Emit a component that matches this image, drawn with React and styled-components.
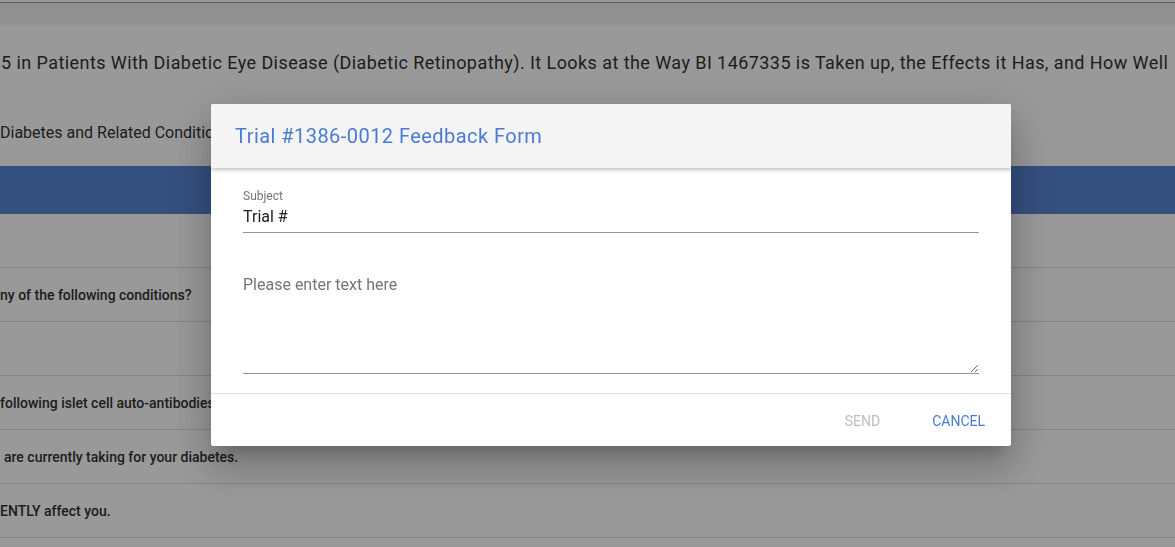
import styled, { createGlobalStyle } from "styled-components";

const GlobalStyle = createGlobalStyle`
  * { box-sizing: border-box; }
  html, body {
    margin: 0;
    padding: 0;
    background: #ffffff;
    font-family: Roboto, "Liberation Sans", sans-serif;
    overflow: hidden;
  }
`;

const Page = styled.div`
  width: 100vw;
  height: 100vh;
  overflow: hidden;
  background: #ffffff;
  padding-top: 2px;
`;

const TopBar = styled.div`
  height: 23px;
  background: #f1f1f1;
  border-top: 1px solid #9a9a9a;
  border-bottom: 1px solid #f6f6f6;
`;

const TitleLine = styled.div`
  height: 74px;
  display: flex;
  align-items: center;
  padding-left: 1px;
  font-size: 18px;
  letter-spacing: 0.43px;
  color: #333;
  white-space: nowrap;
  overflow: hidden;
`;

const SubLine = styled.div`
  height: 67px;
  display: flex;
  align-items: center;
  padding-top: 1px;
  padding-bottom: 1px;
  font-size: 16px;
  color: #333;
  white-space: nowrap;
`;

const BlueBar = styled.div`
  height: 48px;
  background: #5885d4;
`;

const Spacer = styled.div`
  height: 54px;
  border-bottom: 1px solid #dcdcdc;
`;

const Row = styled.div`
  height: 54px;
  display: flex;
  align-items: center;
  padding-left: ${(p) => p.$indent || 0}px;
  border-bottom: 1px solid #dcdcdc;
  font-size: 14px;
  font-weight: 500;
  color: #333;
  white-space: nowrap;
`;

const Overlay = styled.div`
  position: fixed;
  inset: 0;
  background: rgba(0, 0, 0, 0.4);
  display: flex;
  justify-content: center;
  align-items: flex-start;
  padding-top: 104px;
  padding-left: 47px;
`;

const Dialog = styled.div`
  width: 800px;
  background: #ffffff;
  border-radius: 2px;
  box-shadow: 0 11px 15px -7px rgba(0, 0, 0, 0.2),
    0 24px 38px 3px rgba(0, 0, 0, 0.14), 0 9px 46px 8px rgba(0, 0, 0, 0.12);
  overflow: hidden;
`;

const DialogHeader = styled.div`
  height: 64px;
  background: #f4f4f4;
  display: flex;
  align-items: center;
  padding: 0 24px;
  box-shadow: 0 2px 4px rgba(0, 0, 0, 0.25);
  position: relative;
`;

const DialogTitle = styled.h2`
  margin: 0;
  font-size: 20px;
  font-weight: 400;
  letter-spacing: 0.45px;
  color: #4a7bd2;
`;

const DialogBody = styled.div`
  padding: 21px 32px 19px;
  border-bottom: 1px solid #e0e0e0;
`;

const Field = styled.label`
  display: flex;
  flex-direction: column;
  border-bottom: 1px solid #949494;
`;

const FieldLabel = styled.span`
  font-size: 12px;
  color: #757575;
  line-height: 14px;
`;

const TextInput = styled.input`
  border: none;
  outline: none;
  padding: 4px 0 6px;
  font-family: inherit;
  font-size: 16px;
  color: #222;
  background: transparent;
`;

const TextArea = styled.textarea`
  display: block;
  width: 100%;
  height: 103px;
  margin-top: 38px;
  border: none;
  border-bottom: 1px solid #949494;
  outline: none;
  padding: 4px 0 0;
  font-family: inherit;
  font-size: 16px;
  color: #222;
  resize: vertical;
  &::placeholder {
    color: #757575;
  }
`;

const Actions = styled.div`
  height: 52px;
  padding-top: 2px;
  display: flex;
  align-items: center;
  justify-content: flex-end;
  padding-right: 8px;
  gap: 18px;
`;

const ActionButton = styled.button`
  border: none;
  background: transparent;
  font-family: inherit;
  font-size: 14px;
  text-transform: uppercase;
  padding: 8px 18px 8px 16px;
  min-width: 64px;
  color: ${(p) => (p.disabled ? "#bdbdbd" : "#4a7bd2")};
  cursor: ${(p) => (p.disabled ? "default" : "pointer")};
`;

const rows = [
  { text: "ny of the following conditions?", indent: 0 },
  { text: "", indent: 0 },
  { text: "following islet cell auto-antibodies", indent: 0 },
  { text: "are currently taking for your diabetes.", indent: 4 },
  { text: "ENTLY affect you.", indent: 0 },
];

const App = () => {
  return (
    <>
      <GlobalStyle />
      <Page>
        <TopBar />
        <TitleLine>
          5 in Patients With Diabetic Eye Disease (Diabetic Retinopathy). It
          Looks at the Way BI 1467335 is Taken up, the Effects it Has, and How
          Well
        </TitleLine>
        <SubLine>Diabetes and Related Conditions</SubLine>
        <BlueBar />
        <Spacer />
        {rows.map((r, i) => (
          <Row key={i} $indent={r.indent}>
            {r.text}
          </Row>
        ))}
      </Page>
      <Overlay>
        <Dialog>
          <DialogHeader>
            <DialogTitle>Trial #1386-0012 Feedback Form</DialogTitle>
          </DialogHeader>
          <DialogBody>
            <Field>
              <FieldLabel>Subject</FieldLabel>
              <TextInput type="text" defaultValue="Trial #" />
            </Field>
            <TextArea placeholder="Please enter text here" />
          </DialogBody>
          <Actions>
            <ActionButton disabled>Send</ActionButton>
            <ActionButton>Cancel</ActionButton>
          </Actions>
        </Dialog>
      </Overlay>
    </>
  );
};

export default App;
